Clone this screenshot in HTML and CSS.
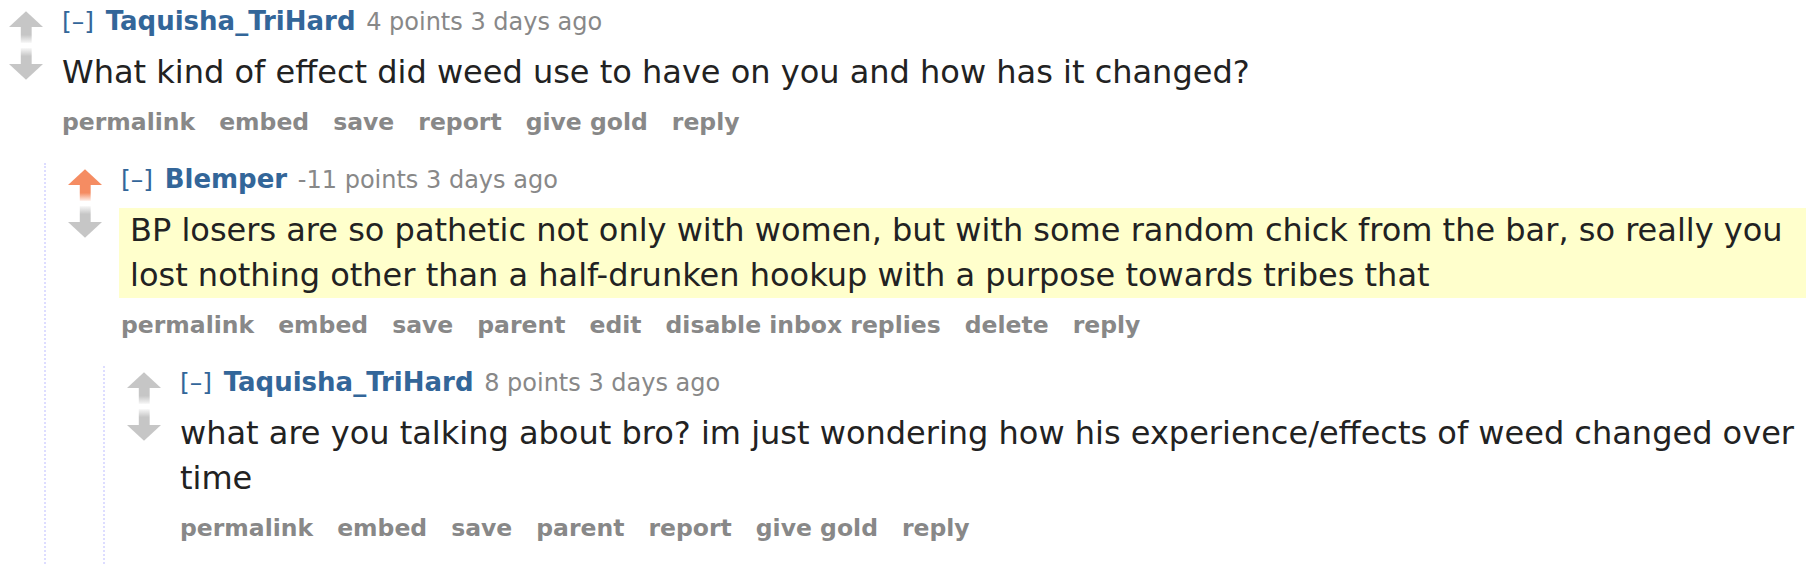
FILE: index.html
```html
<!DOCTYPE html>
<html>
<head>
<meta charset="utf-8">
<link rel="stylesheet" href="styles.css">
</head>
<body>
<div class="thread">
  <div class="comment">
    <div class="main">
      <div class="midcol">
        <svg class="arrow" viewBox="0 0 15 14" width="34" height="32"><defs><linearGradient id="fu1" x1="0" y1="0" x2="0" y2="1"><stop offset="0.5" stop-color="#c6c6c6"/><stop offset="1" stop-color="#c6c6c6" stop-opacity="0.15"/></linearGradient></defs><polygon points="0,7 7.5,0 15,7" fill="#c6c6c6"/><rect x="5.2" y="6.9" width="4.8" height="7.1" fill="url(#fu1)"/></svg>
        <svg class="arrow" viewBox="0 0 15 14" width="34" height="32"><defs><linearGradient id="fd1" x1="0" y1="1" x2="0" y2="0"><stop offset="0.5" stop-color="#c6c6c6"/><stop offset="1" stop-color="#c6c6c6" stop-opacity="0.15"/></linearGradient></defs><polygon points="0,7 7.5,14 15,7" fill="#c6c6c6"/><rect x="5.2" y="0" width="4.8" height="7.1" fill="url(#fd1)"/></svg>
      </div>
      <div class="entry">
        <p class="tagline"><a class="expand">[–]</a> <a class="author">Taquisha_TriHard</a> <span class="score">4 points</span> <span class="time">3 days ago</span></p>
        <div class="md"><p>What kind of effect did weed use to have on you and how has it changed?</p></div>
        <ul class="buttons"><li>permalink</li><li>embed</li><li>save</li><li>report</li><li>give gold</li><li>reply</li></ul>
      </div>
    </div>
    <div class="child">
      <div class="comment">
        <div class="main">
          <div class="midcol">
            <svg class="arrow" viewBox="0 0 15 14" width="34" height="32"><defs><linearGradient id="fu2" x1="0" y1="0" x2="0" y2="1"><stop offset="0.5" stop-color="#f58c62"/><stop offset="1" stop-color="#f58c62" stop-opacity="0.15"/></linearGradient></defs><polygon points="0,7 7.5,0 15,7" fill="#f58c62"/><rect x="5.2" y="6.9" width="4.8" height="7.1" fill="url(#fu2)"/></svg>
            <svg class="arrow" viewBox="0 0 15 14" width="34" height="32"><defs><linearGradient id="fd2" x1="0" y1="1" x2="0" y2="0"><stop offset="0.5" stop-color="#c6c6c6"/><stop offset="1" stop-color="#c6c6c6" stop-opacity="0.15"/></linearGradient></defs><polygon points="0,7 7.5,14 15,7" fill="#c6c6c6"/><rect x="5.2" y="0" width="4.8" height="7.1" fill="url(#fd2)"/></svg>
          </div>
          <div class="entry">
            <p class="tagline"><a class="expand">[–]</a> <a class="author">Blemper</a> <span class="score">-11 points</span> <span class="time">3 days ago</span></p>
            <div class="md mine"><p>BP losers are so pathetic not only with women, but with some random chick from the bar, so really you lost nothing other than a half-drunken hookup with a purpose towards tribes that</p></div>
            <ul class="buttons"><li>permalink</li><li>embed</li><li>save</li><li>parent</li><li>edit</li><li>disable inbox replies</li><li>delete</li><li>reply</li></ul>
          </div>
        </div>
        <div class="child">
          <div class="comment">
            <div class="main">
              <div class="midcol">
                <svg class="arrow" viewBox="0 0 15 14" width="34" height="32"><defs><linearGradient id="fu3" x1="0" y1="0" x2="0" y2="1"><stop offset="0.5" stop-color="#c6c6c6"/><stop offset="1" stop-color="#c6c6c6" stop-opacity="0.15"/></linearGradient></defs><polygon points="0,7 7.5,0 15,7" fill="#c6c6c6"/><rect x="5.2" y="6.9" width="4.8" height="7.1" fill="url(#fu3)"/></svg>
                <svg class="arrow" viewBox="0 0 15 14" width="34" height="32"><defs><linearGradient id="fd3" x1="0" y1="1" x2="0" y2="0"><stop offset="0.5" stop-color="#c6c6c6"/><stop offset="1" stop-color="#c6c6c6" stop-opacity="0.15"/></linearGradient></defs><polygon points="0,7 7.5,14 15,7" fill="#c6c6c6"/><rect x="5.2" y="0" width="4.8" height="7.1" fill="url(#fd3)"/></svg>
              </div>
              <div class="entry">
                <p class="tagline"><a class="expand">[–]</a> <a class="author">Taquisha_TriHard</a> <span class="score">8 points</span> <span class="time">3 days ago</span></p>
                <div class="md"><p>what are you talking about bro? im just wondering how his experience/effects of weed changed over time</p></div>
                <ul class="buttons"><li>permalink</li><li>embed</li><li>save</li><li>parent</li><li>report</li><li>give gold</li><li>reply</li></ul>
              </div>
            </div>
          </div>
        </div>
      </div>
    </div>
  </div>
</div>
</body>
</html>
```

FILE: styles.css
```css
html, body {
  margin: 0;
  padding: 0;
  background: #fff;
  overflow: hidden;
}
body {
  font-family: "DejaVu Sans", Verdana, sans-serif;
  color: #222;
  height: 564px;
}
.thread {
  padding: 5px 0 0 9px;
  height: 564px;
  box-sizing: border-box;
}
.comment {
  display: flex;
  flex-direction: column;
}
.thread > .comment {
  height: 100%;
}
.main {
  display: flex;
}
.midcol {
  flex: none;
  width: 34px;
  margin-right: 19px;
  padding-top: 6px;
  display: flex;
  flex-direction: column;
  gap: 5px;
}
.arrow {
  display: block;
}
.entry {
  flex: 1;
  min-width: 0;
}
.tagline {
  margin: 2px 0 0;
  font-size: 24px;
  line-height: 28px;
  color: #888;
  white-space: nowrap;
}
.expand {
  color: #369;
  font-size: 25px;
  margin-right: 4px;
}
.author {
  color: #369;
  font-weight: bold;
  font-size: 26px;
  margin-right: 3px;
}
.md {
  margin: 14px 0 13px;
  font-size: 32px;
  line-height: 45px;
  color: #222;
}
.md p {
  margin: 0;
}
.md.mine {
  background: #ffc;
  margin-left: -2px;
  padding-left: 11px;
}
.buttons {
  list-style: none;
  margin: 3px 0 0;
  padding: 0;
  display: flex;
  gap: 24px;
  font-size: 23.5px;
  line-height: 28px;
  font-weight: bold;
  color: #888;
  white-space: nowrap;
}
.child {
  flex: 1;
  margin: 27px 0 0 35px;
  border-left: 2px dotted #ddf;
  padding-left: 22px;
  display: flex;
  flex-direction: column;
}
.child > .comment {
  flex: 1;
}
```
